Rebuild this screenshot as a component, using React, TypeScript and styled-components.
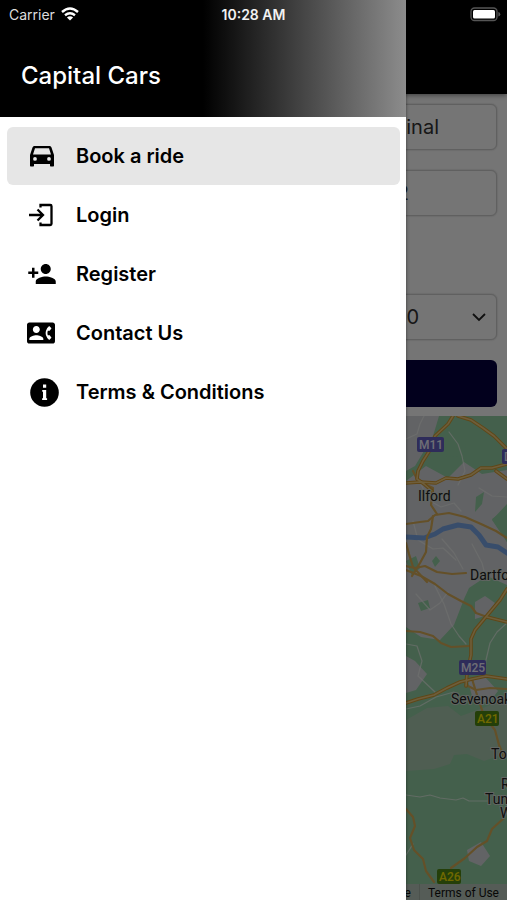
import React from "react";
import styled, { createGlobalStyle } from "styled-components";
import { MdContactPhone, MdPersonAdd } from "react-icons/md";

const GlobalStyle = createGlobalStyle`
  *, *::before, *::after { box-sizing: border-box; }
  body { margin: 0; font-family: Inter, "Liberation Sans", sans-serif; }
`;

const Shell = styled.div`
  position: relative;
  min-height: 100vh;
  display: flex;
  flex-direction: column;
  overflow: hidden;
  background: #fff;
`;

const StatusBar = styled.header`
  position: absolute;
  inset: 0 0 auto;
  z-index: 3;
  display: grid;
  grid-template-columns: 1fr auto 1fr;
  align-items: center;
  height: 28px;
  padding: 0 6px;
  color: #fff;
  font-size: 14px;
`;

const Carrier = styled.span`
  display: flex;
  align-items: center;
  gap: 6px;
  padding-left: 3px;
  color: #ddd;
`;

const Clock = styled.time`
  font-weight: 600;
  color: #f2f2f2;
`;

const BatteryIcon = styled.svg`
  justify-self: end;
`;

const Booking = styled.main`
  flex: 1;
  display: flex;
  flex-direction: column;
`;

const TopBar = styled.div`
  height: 94px;
  background: #000;
  box-shadow: 0 1px 5px rgba(0, 0, 0, 0.5);
`;

const Form = styled.form`
  display: grid;
  gap: 20px;
  padding: 10px 10px 9px;
`;

const Field = styled.input<{ $inset: number }>`
  width: 100%;
  height: 46px;
  padding: 0 ${(p) => p.$inset}px 0 12px;
  border: 1px solid #d2d2d2;
  border-radius: 6px;
  background: #fff;
  box-shadow: 0 0 2px rgba(0, 0, 0, 0.25);
  color: #333;
  font: 20px Inter, sans-serif;
  text-align: right;
`;

const SelectWrap = styled.div`
  display: grid;
  align-items: center;
  margin-top: 58px;
  > * { grid-area: 1 / 1; }
`;

const TimeSelect = styled.select`
  appearance: none;
  width: 100%;
  height: 46px;
  padding: 0 77px 0 12px;
  border: 1px solid #d2d2d2;
  border-radius: 6px;
  background: #fff;
  box-shadow: 0 0 2px rgba(0, 0, 0, 0.25);
  color: #333;
  font: 20px Inter, sans-serif;
  text-align: right;
  text-align-last: right;
`;

const Chevron = styled.svg`
  justify-self: end;
  margin-right: 10px;
  pointer-events: none;
`;

const Submit = styled.button`
  height: 47px;
  border: 0;
  border-radius: 6px;
  background: #060040;
`;

const MapArea = styled.section`
  flex: 1;
  display: flex;
  flex-direction: column;
  background: #94d2a5;
`;

const MapDrawing = styled.svg`
  flex: 1;
  align-self: flex-end;
  width: 101px;
  min-height: 468px;
`;

const Attribution = styled.footer`
  display: flex;
  justify-content: flex-end;
  height: 16px;
  background: #b9c9bd;
  font: 12px/18px Roboto, sans-serif;
`;

const MapLink = styled.a`
  padding: 0 8px;
  border-left: 1px solid #a5b3a9;
  color: #111;
  text-decoration: none;
  white-space: nowrap;
`;

const Scrim = styled.div`
  position: absolute;
  inset: 0;
  z-index: 1;
  background: rgba(0, 0, 0, 0.54);
`;

const Drawer = styled.aside`
  position: absolute;
  inset: 0 auto 0 0;
  z-index: 2;
  width: 80%;
  background: #fff;
  box-shadow: 0 0 3px rgba(0, 0, 0, 0.5);
`;

const DrawerHeader = styled.div`
  height: 117px;
  padding: 60px 21px 0;
  background: linear-gradient(90deg, #000 50%, #8c8c8c);
`;

const Brand = styled.h1`
  margin: 0;
  color: #fff;
  font-size: 24px;
  font-weight: 500;
  line-height: 32px;
`;

const Menu = styled.nav`
  display: grid;
  padding: 10px 6px 0 7px;
`;

const MenuItem = styled.a<{ $active?: boolean }>`
  display: grid;
  grid-template-columns: 32px 1fr;
  align-items: center;
  column-gap: 17px;
  height: 58px;
  margin-bottom: 1px;
  padding: 0 20px;
  border-radius: 6px;
  background: ${(p) => (p.$active ? "#e6e6e6" : "transparent")};
  color: #000;
  font-size: 20px;
  font-weight: 600;
  text-decoration: none;
`;

const IconSlot = styled.span<{ $align?: string }>`
  display: flex;
  justify-content: ${(p) => p.$align ?? "flex-start"};
`;

const CarIcon = () => (
  <svg width="30" height="24" viewBox="0 0 30 24" fill="currentColor">
    <path
      fillRule="evenodd"
      d="M7.6 2h14.8c1 0 1.8.6 2.1 1.5L27 11v10.6c0 .6-.4 1-1 1h-2c-.6 0-1-.4-1-1V20H7v1.600c0 .6-.4 1-1 1H4c-.6 0-1-.4-1-1V11l2.500-7.500C5.800 2.600 6.600 2 7.600 2zM8 4.200L6 10.400h18L22 4.200zM8 13a1.900 1.900 0 1 0 0 3.800A1.900 1.900 0 0 0 8 13zM22 13a1.900 1.900 0 1 0 0 3.800A1.900 1.900 0 0 0 22 13z"
    />
  </svg>
);

const LoginIcon = () => (
  <svg width="28" height="24" viewBox="0 0 28 24" fill="none" stroke="currentColor" strokeWidth="2.3">
    <path d="M13.500 4.600V2h9.700q1.300 0 1.300 1.300v17.400q0 1.300-1.300 1.300H13.500v-2.600" />
    <path d="M2 12h14M10.500 6.500L16 12l-5.500 5.500" />
  </svg>
);

const InfoIcon = () => (
  <svg width="29" height="29" viewBox="0 0 29 29">
    <circle cx="14.500" cy="14.500" r="14.300" fill="currentColor" />
    <path d="M13 6.600h3.200v3.100H13zM12.200 12h4v8.200h.9v1.800h-5v-1.800h.9v-6.400h-.8z" fill="#fff" />
  </svg>
);

const items = [
  { label: "Book a ride", icon: <CarIcon />, active: true },
  { label: "Login", icon: <LoginIcon /> },
  { label: "Register", icon: <MdPersonAdd size={30} /> },
  { label: "Contact Us", icon: <MdContactPhone size={28} /> },
  { label: "Terms & Conditions", icon: <InfoIcon />, align: "flex-end" },
];

const places = [
  { name: "Ilford", x: 12, y: 85 },
  { name: "Dartford", x: 64, y: 164 },
  { name: "Sevenoaks", x: 45, y: 288 },
  { name: "Tonbridge", x: 85, y: 343 },
  { name: "Royal", x: 95, y: 373 },
  { name: "Tunbridge", x: 79, y: 388 },
  { name: "Wells", x: 94, y: 402 },
];

const shields = [
  { name: "M11", x: 11, y: 21, w: 27, motorway: true },
  { name: "D", x: 96, y: 33, w: 20, motorway: true },
  { name: "M25", x: 53, y: 244, w: 27, motorway: true },
  { name: "A21", x: 69, y: 295, w: 24, motorway: false },
  { name: "A26", x: 31, y: 453, w: 24, motorway: false },
];

const mainRoads = [
  "M47 0L42 8 29 20 24 34 17 45 12 55 11 63 18 68 26 75",
  "M52 0L65 4 77 12 88 20 101 33",
  "M0 67L14 66 30 67 40 62 52 63 65 59 75 52 86 52 101 48",
  "M90 55L101 63",
  "M101 173L94 184 84 196 79 202 69 214 65 223 65 239 61 258 60 270",
  "M0 287L12 283 28 279 41 272 54 266 66 263 80 260 101 263",
  "M81 201L101 206",
];

const minorRoads = [
  "M0 150L9 152 19 150 31 156 46 158 60 157",
  "M0 108L14 106 22 105 29 99 43 97 59 101 75 108 90 115 101 122",
  "M27 100L25 113 21 121 20 136 14 147 6 160",
  "M0 154L15 160 29 168 42 178 55 185 65 190 70 197 81 201",
  "M0 215L14 216 27 220 35 227 45 231 64 230",
  "M60 269L70 274 84 272 101 273",
  "M66 263L71 279 78 300 89 314 93 329 98 341",
  "M0 393L7 401 9 410 4 422 8 434 17 443 20 455 28 466",
  "M98 402L86 413 81 425 71 431 59 442 45 452",
  "M7 55L12 65 27 72 25 89 31 98",
  "M0 127L3 138 7 151 21 166",
];

const lanes = [
  "M18 0L14 8 11 18 0 23",
  "M43 16L52 28 56 40 59 55 52 69",
  "M15 68L22 84 35 91 48 87 55 95",
  "M73 72L86 80 101 81",
  "M7 105L12 124 27 133 37 132 50 144",
  "M36 123L48 137 57 153",
  "M66 128L76 147 80 162",
  "M29 170L38 188 45 208 53 220 60 228",
  "M101 207L91 216 84 227 80 244 78 260",
  "M0 228L11 230 16 245 12 260 29 276",
  "M0 293L14 290 30 281 48 276",
  "M0 379L14 381 24 379 34 382 50 384 57 382 63 385 84 385",
  "M10 178L24 194 34 187 42 176",
  "M0 439L7 428",
];

const urban = [
  "M0 0L33 0 27 20 9 50 0 55z",
  "M0 65L20 50 42 62 58 46 76 58 101 54V92L86 103 101 126V169L81 160 63 172 58 183 48 209 34 224 15 221 0 211z",
  "M69 186l10-6 10 7-7 12-13 4z",
  "M62 265l16-5 14 15-10 13-16-8z",
  "M0 240l9 5 12 13-11 16-10 3z",
  "M61 434l14-8 9 14-9 10-12-5z",
];

const woods = [
  "M26 23L48 10 60 26 58 41 42 40 28 47 25 35z",
  "M70 81l8-5-2 12-7 8z",
  "M86 104l15-16v38z",
  "M0 145l10-5 4 12-8 8z",
  "M26 145l4-5 4 5-5 6z",
  "M12 187l10-3 2 8-9 3z",
];

const CountyMap = () => (
  <MapDrawing viewBox="0 0 101 468" preserveAspectRatio="xMaxYMin slice" aria-label="Map of Kent and east London">
    <rect width="101" height="468" fill="#94d2a5" />
    <path d="M0 304L21 292 42 290 55 300 101 283V337L78 345 61 338 48 339 44 348 28 353 0 355z" fill="#adccb3" />
    {urban.map((d) => <path key={d} d={d} fill="#d6d8dc" />)}
    {woods.map((d) => <path key={d} d={d} fill="#94d2a5" />)}
    <g fill="none" strokeLinejoin="round" strokeLinecap="round">
      {lanes.map((d) => <path key={d} d={d} stroke="#f1f3f1" strokeWidth="1.2" opacity="0.7" />)}
      <path d="M0 121L18 122 29 118 37 113 52 109 65 111 73 119 80 129 92 131 101 137" stroke="#7ba9ea" strokeWidth="5" />
      {minorRoads.map((d) => <path key={d} d={d} stroke="#d9ae58" strokeWidth="2.2" />)}
      {mainRoads.map((d) => <path key={d} d={d} stroke="#d39a32" strokeWidth="3.6" />)}
      {mainRoads.map((d) => <path key={d} d={d} stroke="#f0cd80" strokeWidth="1.6" />)}
    </g>
    <g fontFamily="Roboto, sans-serif" fontSize="14">
      {places.map((p) => (
        <text key={p.name} x={p.x} y={p.y} fill="#222" stroke="#d3dcd5" strokeWidth="2" paintOrder="stroke">{p.name}</text>
      ))}
    </g>
    <g fontFamily="Roboto, sans-serif" fontSize="12" fontWeight="500">
      {shields.map((s) => (
        <g key={s.name}>
          <rect x={s.x} y={s.y} width={s.w} height="15" rx="2" fill={s.motorway ? "#6460c4" : "#4f8a14"} />
          <text x={s.x + 2} y={s.y + 12} fill={s.motorway ? "#f0f0ff" : "#f5e400"}>{s.name}</text>
        </g>
      ))}
    </g>
  </MapDrawing>
);

export default function App() {
  return (
    <>
      <GlobalStyle />
      <Shell>
        <StatusBar>
          <Carrier>
            Carrier
            <svg width="18" height="14" viewBox="0 0 18 14" fill="none" stroke="#fff" strokeWidth="2.4" aria-label="Wi-Fi">
              <path d="M1 5Q9-2 17 5" />
              <path d="M4 8.3q5-4 10 0" />
              <path d="M9 13.4L5.9 10.5q3.1-2.5 6.2 0z" fill="#fff" stroke="none" />
            </svg>
          </Carrier>
          <Clock>10:28 AM</Clock>
          <BatteryIcon width="31" height="15" viewBox="0 0 31 15" aria-label="Battery full">
            <rect x="1" y="1" width="26" height="12.5" rx="3.5" fill="#000" stroke="#555" strokeWidth="1.3" />
            <rect x="3" y="3" width="22" height="8.5" rx="1.5" fill="#fff" />
            <path d="M28.3 5q2 .5 2 2.2t-2 2.2z" fill="#555" />
          </BatteryIcon>
        </StatusBar>

        <Booking>
          <TopBar />
          <Form>
            <Field $inset={57} aria-label="Pick up" defaultValue="Terminal" />
            <Field $inset={87} aria-label="Drop off" defaultValue="2" />
            <SelectWrap>
              <TimeSelect aria-label="Passengers">
                <option>0</option>
              </TimeSelect>
              <Chevron width="16" height="10" viewBox="0 0 16 10" fill="none" stroke="#222" strokeWidth="1.8">
                <path d="M2 2l6 6 6-6" />
              </Chevron>
            </SelectWrap>
            <Submit type="button" aria-label="Book" />
          </Form>
          <MapArea>
            <CountyMap />
            <Attribution>
              <MapLink href="#google">Google</MapLink>
              <MapLink href="#terms">Terms of Use</MapLink>
            </Attribution>
          </MapArea>
        </Booking>

        <Scrim />

        <Drawer>
          <DrawerHeader>
            <Brand>Capital Cars</Brand>
          </DrawerHeader>
          <Menu>
            {items.map((item) => (
              <MenuItem key={item.label} href="#" $active={item.active}>
                <IconSlot $align={item.align}>{item.icon}</IconSlot>
                {item.label}
              </MenuItem>
            ))}
          </Menu>
        </Drawer>
      </Shell>
    </>
  );
}
